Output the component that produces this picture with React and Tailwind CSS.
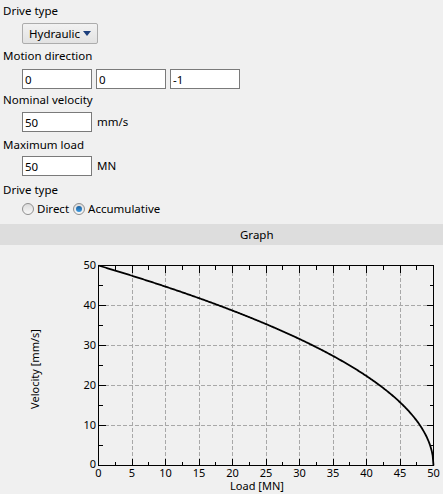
import React from 'react';

const font = { fontFamily: '"Noto Sans", "Open Sans", sans-serif' };

// plot box in svg coords (svg starts at page y=245)
const X0 = 98.5, X1 = 433.5, Y0 = 20.5, Y1 = 220.5;
const sx = (l) => X0 + (l / 50) * (X1 - X0);
const sy = (v) => Y1 - (v / 50) * (Y1 - Y0);

function curvePoints() {
    const pts = [];
    for (let i = 0; i <= 400; i++) {
        const l = (i / 400) * 50;
        const v = 50 * Math.sqrt(Math.max(0, 1 - l / 50));
        pts.push(`${sx(l).toFixed(2)},${sy(v).toFixed(2)}`);
    }
    return pts.join(' ');
}

function Chart() {
    const xs = [0, 5, 10, 15, 20, 25, 30, 35, 40, 45, 50];
    const ys = [0, 10, 20, 30, 40, 50];
    const ticks = [];
    for (let i = 1; i < 20; i++) {
        const x = sx(i * 2.5);
        const len = i % 2 === 0 ? 7 : 4;
        ticks.push(<line key={'b' + i} x1={x} x2={x} y1={Y1} y2={Y1 - len} />);
        ticks.push(<line key={'t' + i} x1={x} x2={x} y1={Y0} y2={Y0 + len} />);
    }
    for (let i = 1; i < 10; i++) {
        const y = sy(i * 5);
        const len = i % 2 === 0 ? 7 : 4;
        ticks.push(<line key={'l' + i} x1={X0} x2={X0 + len} y1={y} y2={y} />);
        ticks.push(<line key={'r' + i} x1={X1} x2={X1 - len} y1={y} y2={y} />);
    }
    return (
        <svg width="443" height="249" className="block" style={font}>
            <g stroke="#a8a8a8" strokeDasharray="4 2" shapeRendering="crispEdges">
                {xs.slice(1, -1).map(l => <line key={l} x1={sx(l)} x2={sx(l)} y1={Y0} y2={Y1} />)}
                {ys.slice(1, -1).map(v => <line key={v} x1={X0} x2={X1} y1={sy(v)} y2={sy(v)} />)}
            </g>
            <g stroke="#000" shapeRendering="crispEdges">
                {ticks}
                <rect x={X0} y={Y0} width={X1 - X0} height={Y1 - Y0} fill="none" />
            </g>
            <polyline points={curvePoints()} fill="none" stroke="#000" strokeWidth="1.8" strokeLinejoin="round" />
            <g fontSize="11" fill="#000">
                {ys.map(v => (
                    <text key={v} x="96" y={sy(v) + (v === 0 ? 2 : 3)} textAnchor="end">{v}</text>
                ))}
                {xs.map(l => (
                    <text key={l} x={sx(l)} y="231.5" textAnchor="middle">{l}</text>
                ))}
                <text x="257" y="245" textAnchor="middle">Load [MN]</text>
                <text x="0" y="0" textAnchor="middle" transform="translate(39 124) rotate(-90)">Velocity [mm/s]</text>
            </g>
        </svg>
    );
}

function Field({ value }) {
    return (
        <input
            readOnly
            value={value}
            className="w-[70px] h-[20px] border border-[#7a7a7a] bg-white px-[2px] text-[11.5px] text-black outline-none"
            style={font}
        />
    );
}

function Radio({ checked, label }) {
    return (
        <label className="flex items-center gap-[3px]">
            <span className="w-[12px] h-[12px] rounded-full border border-[#8f8f8f] bg-gradient-to-b from-[#dcdcdc] to-[#f8f8f8] flex items-center justify-center">
                {checked && <span className="w-[6px] h-[6px] rounded-full bg-gradient-to-b from-[#1b5f9e] to-[#3d9be0]" />}
            </span>
            <span>{label}</span>
        </label>
    );
}

export default function App() {
    return (
        <div className="w-[443px] h-[494px] bg-[#f0f0f0] text-[11.5px] leading-[16px] text-black overflow-hidden" style={font}>
            <div className="pl-[3px] pt-[3px]">Drive type</div>
            <div className="pl-[22px] mt-[4px]">
                <div className="w-[76px] h-[21px] border border-[#acacac] rounded-[2px] bg-gradient-to-b from-[#f2f2f2] to-[#e2e2e2] flex items-center justify-between pl-[6px] pr-[6px]">
                    <span>Hydraulic</span>
                    <svg width="8" height="5" viewBox="0 0 8 5"><path d="M0 0h8L4 5z" fill="#1c3f7c" /></svg>
                </div>
            </div>

            <div className="pl-[3px] mt-[4px]">Motion direction</div>
            <div className="pl-[22px] mt-[5px] flex gap-[4px]">
                <Field value="0" />
                <Field value="0" />
                <Field value="-1" />
            </div>

            <div className="pl-[3px] mt-[3px]">Nominal velocity</div>
            <div className="pl-[22px] mt-[4px] flex items-center gap-[5px]">
                <Field value="50" />
                <span>mm/s</span>
            </div>

            <div className="pl-[3px] mt-[5px]">Maximum load</div>
            <div className="pl-[22px] mt-[3px] flex items-center gap-[5px]">
                <Field value="50" />
                <span>MN</span>
            </div>

            <div className="pl-[3px] mt-[6px]">Drive type</div>
            <div className="pl-[22px] mt-[3px] flex items-center gap-[4px]">
                <Radio label="Direct" />
                <Radio checked label="Accumulative" />
            </div>

            <div className="mt-[7px] h-[21px] bg-[#dddddd] flex items-center pl-[240px]">Graph</div>
            <Chart />
        </div>
    );
}
